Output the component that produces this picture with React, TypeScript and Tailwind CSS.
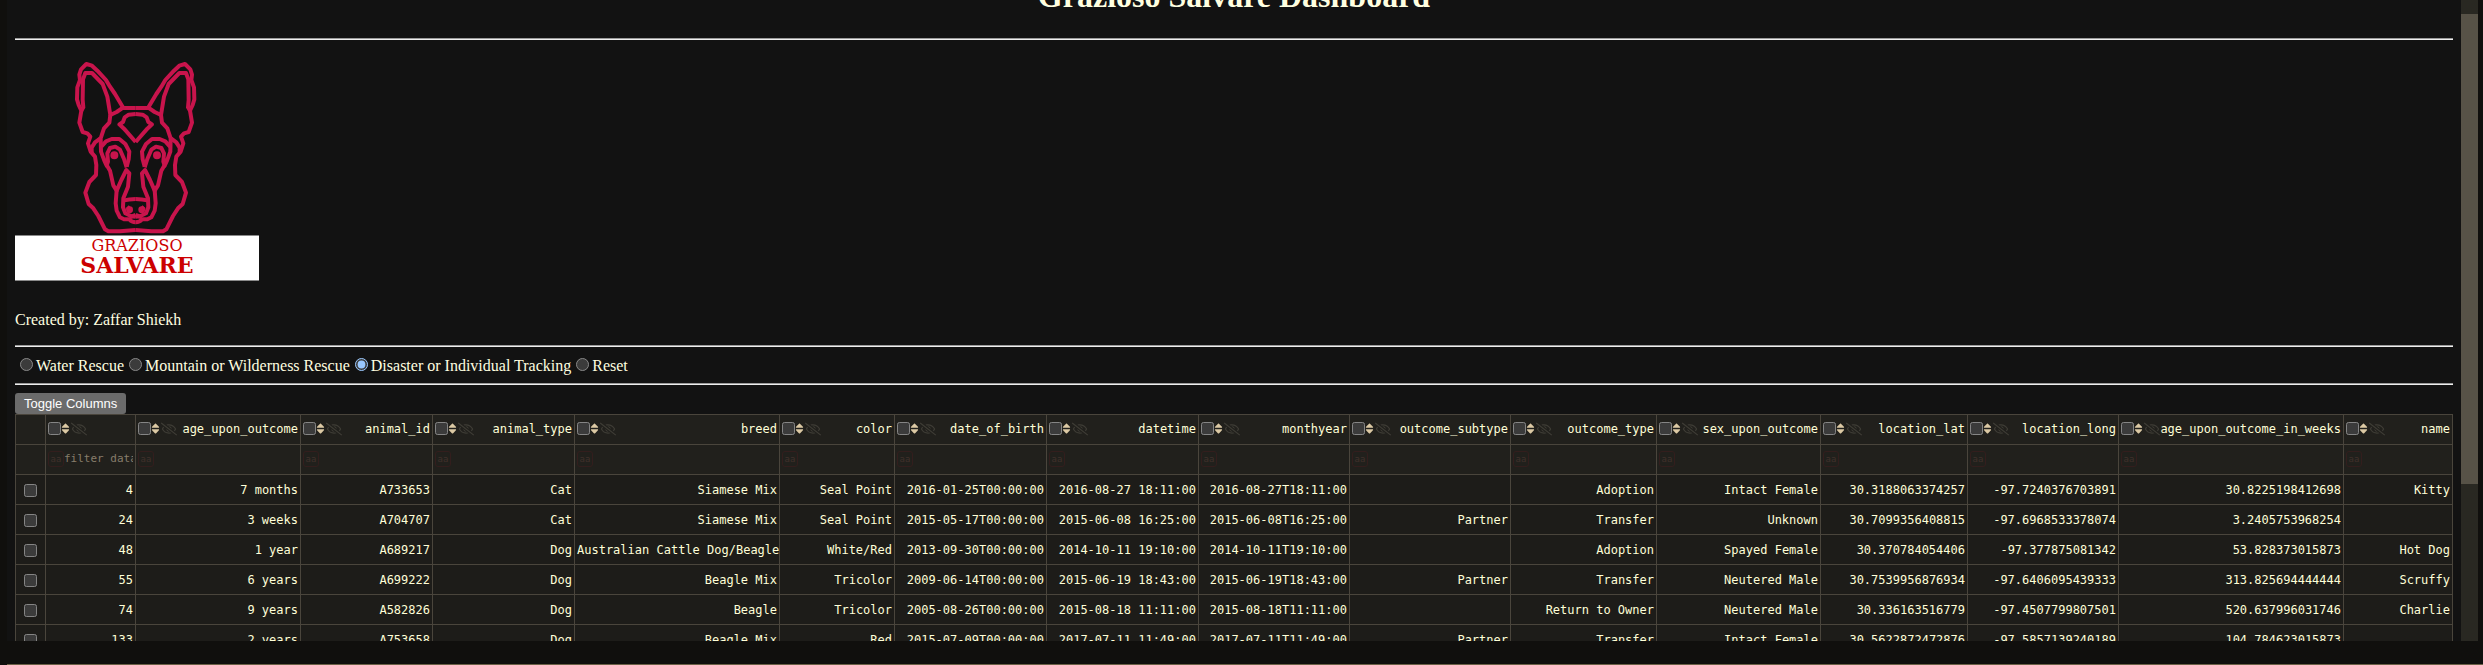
import { FaRegEyeSlash, FaSort } from "react-icons/fa";

type Column = { id: string; width: string };

const columns: Column[] = [
  { id: "", width: "w-[90px]" },
  { id: "age_upon_outcome", width: "w-[165px]" },
  { id: "animal_id", width: "w-[132px]" },
  { id: "animal_type", width: "w-[142px]" },
  { id: "breed", width: "w-[205px]" },
  { id: "color", width: "w-[115px]" },
  { id: "date_of_birth", width: "w-[152px]" },
  { id: "datetime", width: "w-[152px]" },
  { id: "monthyear", width: "w-[151px]" },
  { id: "outcome_subtype", width: "w-[161px]" },
  { id: "outcome_type", width: "w-[146px]" },
  { id: "sex_upon_outcome", width: "w-[164px]" },
  { id: "location_lat", width: "w-[147px]" },
  { id: "location_long", width: "w-[151px]" },
  { id: "age_upon_outcome_in_weeks", width: "w-[225px]" },
  { id: "name", width: "w-[109px]" },
];

const rows: string[][] = [
  ["4", "7 months", "A733653", "Cat", "Siamese Mix", "Seal Point", "2016-01-25T00:00:00", "2016-08-27 18:11:00", "2016-08-27T18:11:00", "", "Adoption", "Intact Female", "30.3188063374257", "-97.7240376703891", "30.8225198412698", "Kitty"],
  ["24", "3 weeks", "A704707", "Cat", "Siamese Mix", "Seal Point", "2015-05-17T00:00:00", "2015-06-08 16:25:00", "2015-06-08T16:25:00", "Partner", "Transfer", "Unknown", "30.7099356408815", "-97.6968533378074", "3.2405753968254", ""],
  ["48", "1 year", "A689217", "Dog", "Australian Cattle Dog/Beagle", "White/Red", "2013-09-30T00:00:00", "2014-10-11 19:10:00", "2014-10-11T19:10:00", "", "Adoption", "Spayed Female", "30.370784054406", "-97.377875081342", "53.828373015873", "Hot Dog"],
  ["55", "6 years", "A699222", "Dog", "Beagle Mix", "Tricolor", "2009-06-14T00:00:00", "2015-06-19 18:43:00", "2015-06-19T18:43:00", "Partner", "Transfer", "Neutered Male", "30.7539956876934", "-97.6406095439333", "313.825694444444", "Scruffy"],
  ["74", "9 years", "A582826", "Dog", "Beagle", "Tricolor", "2005-08-26T00:00:00", "2015-08-18 11:11:00", "2015-08-18T11:11:00", "", "Return to Owner", "Neutered Male", "30.336163516779", "-97.4507799807501", "520.637996031746", "Charlie"],
  ["133", "2 years", "A753658", "Dog", "Beagle Mix", "Red", "2015-07-09T00:00:00", "2017-07-11 11:49:00", "2017-07-11T11:49:00", "Partner", "Transfer", "Intact Female", "30.5622872472876", "-97.5857139240189", "104.784623015873", ""],
];

const filters = ["Water Rescue", "Mountain or Wilderness Rescue", "Disaster or Individual Tracking", "Reset"];

function Rule() {
  return <hr className="h-[2px] border-0 border-t border-b border-t-[#9a9a9a] border-b-[#eeeeee]" />;
}

function HalfFace() {
  return (
    <>
      <path d="M407 324H370L345 282 330 260 318 240 292 212 276 197 259 192 243 208 238 224 240 240 232 262 231 298 236 315 244 332 238 368 248 396 262 400 271 410 264 430 272 455 285 470 289 495 288 525 268 546 256 578 266 612 280 625 295 648 315 688 325 694 360 694 407 690" />
      <path d="M244 332L250 322 248 300 249 238 256 219H276L308 252 322 290 331 345 350 336 370 322" />
      <path d="M331 345L328 368 312 385 302 415 303 455 313 482 320 497 324 485 322 460 330 444 346 440 360 449 372 477 380 502" />
      <path d="M304 440L318 424 335 417H358L376 432 388 455 386 478 380 500" />
      <path d="M301 415L285 427 275 443 275 458" />
      <path d="M407 342L386 344 374 352 369 366 358 373 372 386 407 426" />
      <path d="M320 495L330 512 340 556 350 572 364 540 379 510 388 520 384 560 370 595 369 622 376 640 394 649 407 650" />
      <path d="M350 570L347 610 350 632 360 652 372 658 388 658Q395 667 407 667" />
      <path d="M368 602Q388 597 407 597M382 620L389 628 380 632M388 652L407 645" />
      <circle cx="389" cy="629" r="4" />
      <circle cx="343" cy="466" r="6" />
    </>
  );
}

function Logo() {
  return (
    <div className="w-[244px]">
      <svg viewBox="45 165 732 540" className="block h-[180px] w-full" fill="none" stroke="#c8144c" strokeWidth="12" strokeLinejoin="round" role="img" aria-label="Grazioso Salvare">
        <HalfFace />
        <g transform="translate(814 0) scale(-1 1)">
          <HalfFace />
        </g>
      </svg>
      <div className="flex h-[46px] flex-col items-center border-y border-[#8a8a8a] bg-white pt-[2px] text-center font-['DejaVu_Serif',serif] text-[#cc0000]">
        <span className="text-[16px] leading-[16px]">GRAZIOSO</span>
        <span className="text-[22px] leading-[22px] font-bold">SALVARE</span>
      </div>
    </div>
  );
}

function HeaderCell({ id }: { id: string }) {
  return (
    <th className="border border-[#4a453c] px-[2px] pb-[2px] font-normal">
      <div className="flex items-center">
        <input type="checkbox" aria-label={`Select column ${id}`} className="size-[13px] shrink-0" />
        <button type="button" aria-label={`Sort ${id}`} className="flex w-2 shrink-0 justify-center text-[#dcc9a4]">
          <FaSort className="size-[13px] shrink-0" />
        </button>
        <button type="button" aria-label={`Hide ${id}`} className="ml-[2px] shrink-0 text-[#3f3d36]">
          <FaRegEyeSlash className="size-[16px]" />
        </button>
        <span className="grow text-right">{id}</span>
      </div>
    </th>
  );
}

function FilterCell({ id, placeholder }: { id: string; placeholder?: string }) {
  return (
    <th className="border border-[#4a453c] px-[2px] pb-[2px] font-normal">
      <div className="flex items-center">
        <button type="button" aria-label={`Case sensitivity ${id}`} className="flex h-4 w-4 shrink-0 items-center justify-center rounded-[3px] border border-[#331e1d] text-[9px] text-[#40302b]">
          aa
        </button>
        <input type="text" aria-label={`Filter ${id}`} placeholder={placeholder} className="w-0 min-w-0 grow bg-transparent p-0 text-left text-[11px] placeholder:text-[#877d6b]" />
      </div>
    </th>
  );
}

function DataTable() {
  return (
    <table className="w-full table-fixed border-collapse bg-[#1d1c19] font-['DejaVu_Sans_Mono',monospace] text-[12px] leading-[16px] whitespace-nowrap text-[#ffffd8]">
      <colgroup>
        <col className="w-[30px]" />
        {columns.map((c) => (
          <col key={c.id} className={c.width} />
        ))}
      </colgroup>
      <thead className="bg-[#21201c]">
        <tr className="h-[30px]">
          <th className="border border-[#4a453c]" />
          {columns.map((c) => (
            <HeaderCell key={c.id} id={c.id} />
          ))}
        </tr>
        <tr className="h-[30px]">
          <th className="border border-[#4a453c]" />
          {columns.map((c, i) => (
            <FilterCell key={c.id} id={c.id} placeholder={i === 0 ? "filter data..." : undefined} />
          ))}
        </tr>
      </thead>
      <tbody>
        {rows.map((row) => (
          <tr key={row[0]} className="h-[30px]">
            <td className="border border-[#4a453c] text-center">
              <input type="checkbox" aria-label={`Select row ${row[0]}`} className="size-[13px] align-middle" />
            </td>
            {row.map((value, i) => (
              <td key={columns[i].id} className="border border-[#4a453c] px-[2px] text-right">
                {value}
              </td>
            ))}
          </tr>
        ))}
      </tbody>
    </table>
  );
}

export default function App() {
  return (
    <div className="flex h-screen flex-col overflow-hidden bg-[#100f0d] pl-[7px] font-['Liberation_Serif',serif] text-[16px] leading-[18px] text-[#ffffe0] scheme-dark">
      <div className="flex min-h-0 grow pr-[5px]">
        <main className="min-w-0 grow overflow-hidden bg-[#121212] px-2">
          <h1 className="-mt-[22px] mb-[23px] text-center text-[32px] leading-[37px] font-bold">Grazioso Salvare Dashboard</h1>
          <Rule />
          <div className="pt-[15px]">
            <Logo />
          </div>
          <p className="mt-[30px] mb-[16px]">Created by: Zaffar Shiekh</p>
          <Rule />
          <div className="flex flex-wrap pt-[9px] pb-[7px]">
            {filters.map((label) => (
              <label key={label} className="flex items-start leading-[20px]">
                <input type="radio" name="rescue" defaultChecked={label.startsWith("Disaster")} className="mt-[2px] mr-[3px] ml-[5px] size-[13px]" />
                {label}
              </label>
            ))}
          </div>
          <Rule />
          <button type="button" className="mt-2 block h-[21px] rounded-[3px] bg-[#6b6b6b] px-[9px] font-['Liberation_Sans',sans-serif] text-[13px] leading-[16px] text-white">
            Toggle Columns
          </button>
          <DataTable />
        </main>
        <div className="flex w-[17px] shrink-0 flex-col bg-[#292822] pt-[14px]">
          <div className="h-[75%] bg-[#575247]" />
        </div>
      </div>
      <div className="h-6 shrink-0 border-b border-[#6b6147]" />
    </div>
  );
}
